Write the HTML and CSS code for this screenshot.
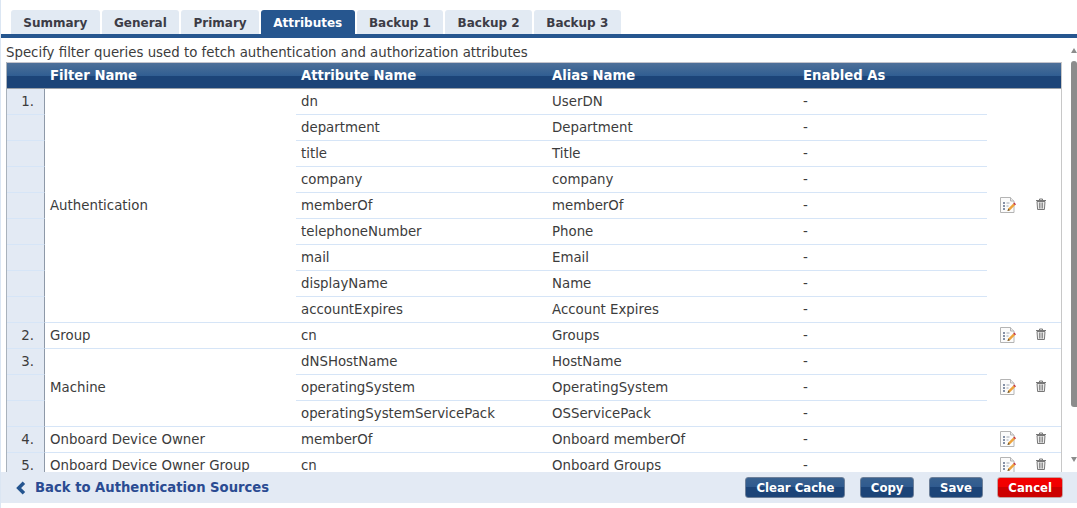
FILE: index.html
```html
<!DOCTYPE html>
<html lang="en">
<head>
<meta charset="utf-8">
<title>Attributes</title>
<link rel="stylesheet" href="styles.css">
</head>
<body>
<svg class="defs" width="0" height="0" aria-hidden="true">
  <symbol id="edit" viewBox="0 0 18 18">
    <path d="M1.5 1.5h10l3.5 3.5v11.500h-13.500z" fill="#fbfbfb" stroke="#b4b4b4"/>
    <path d="M11.500 1.500v3.500h3.500" fill="#e8e8e8" stroke="#b4b4b4"/>
    <path d="M4 7h2M4 10h2M4 13h2" stroke="#5f6f8c" stroke-width="1.500"/>
    <path d="M7.500 7h3M7.500 10h2" stroke="#a0a8b4"/>
    <path d="M8.500 15l.8-2.500 5-5 1.700 1.700-5 5z" fill="#eda33c"/>
    <path d="M8.500 15l.8-2.500 1.700 1.700z" fill="#6b5a3a"/>
    <path d="M14.300 7.500l1-1 1.700 1.700-1 1z" fill="#c8323c"/>
  </symbol>
  <symbol id="trash" viewBox="0 0 12 12">
    <path d="M1 2.500h10M4.500 2.500v-1.500h3v1.500" fill="none" stroke="#777"/>
    <path d="M2 3.500h8l-.6 8h-6.800z" fill="#ececec" stroke="#777"/>
    <path d="M4.500 4.500v6M6 4.500v6M7.500 4.500v6" stroke="#777" stroke-width=".8"/>
  </symbol>
</svg>
<nav class="tabs">
  <a class="tab">Summary</a>
  <a class="tab">General</a>
  <a class="tab">Primary</a>
  <a class="tab active">Attributes</a>
  <a class="tab">Backup 1</a>
  <a class="tab">Backup 2</a>
  <a class="tab">Backup 3</a>
</nav>
<div class="main">
  <div class="content">
    <p class="intro">Specify filter queries used to fetch authentication and authorization attributes</p>
    <table class="grid">
      <colgroup>
        <col class="c-num"><col class="c-name"><col class="c-name"><col class="c-name"><col class="c-en"><col class="c-edit"><col class="c-del">
      </colgroup>
      <thead>
        <tr><th></th><th>Filter Name</th><th>Attribute Name</th><th>Alias Name</th><th>Enabled As</th><th></th><th></th></tr>
      </thead>
      <tbody>
        <tr><td class="num">1.</td><td class="filter" rowspan="9">Authentication</td><td>dn</td><td>UserDN</td><td>-</td><td class="act" rowspan="9"><svg class="i-edit"><use href="#edit"/></svg></td><td class="act del" rowspan="9"><svg class="i-del"><use href="#trash"/></svg></td></tr>
        <tr><td class="num"></td><td>department</td><td>Department</td><td>-</td></tr>
        <tr><td class="num"></td><td>title</td><td>Title</td><td>-</td></tr>
        <tr><td class="num"></td><td>company</td><td>company</td><td>-</td></tr>
        <tr><td class="num"></td><td>memberOf</td><td>memberOf</td><td>-</td></tr>
        <tr><td class="num"></td><td>telephoneNumber</td><td>Phone</td><td>-</td></tr>
        <tr><td class="num"></td><td>mail</td><td>Email</td><td>-</td></tr>
        <tr><td class="num"></td><td>displayName</td><td>Name</td><td>-</td></tr>
        <tr><td class="num"></td><td>accountExpires</td><td>Account Expires</td><td>-</td></tr>
        <tr><td class="num">2.</td><td class="filter">Group</td><td>cn</td><td>Groups</td><td>-</td><td class="act"><svg class="i-edit"><use href="#edit"/></svg></td><td class="act del"><svg class="i-del"><use href="#trash"/></svg></td></tr>
        <tr><td class="num">3.</td><td class="filter" rowspan="3">Machine</td><td>dNSHostName</td><td>HostName</td><td>-</td><td class="act" rowspan="3"><svg class="i-edit"><use href="#edit"/></svg></td><td class="act del" rowspan="3"><svg class="i-del"><use href="#trash"/></svg></td></tr>
        <tr><td class="num"></td><td>operatingSystem</td><td>OperatingSystem</td><td>-</td></tr>
        <tr><td class="num"></td><td>operatingSystemServicePack</td><td>OSServicePack</td><td>-</td></tr>
        <tr><td class="num">4.</td><td class="filter">Onboard Device Owner</td><td>memberOf</td><td>Onboard memberOf</td><td>-</td><td class="act"><svg class="i-edit"><use href="#edit"/></svg></td><td class="act del"><svg class="i-del"><use href="#trash"/></svg></td></tr>
        <tr><td class="num">5.</td><td class="filter">Onboard Device Owner Group</td><td>cn</td><td>Onboard Groups</td><td>-</td><td class="act"><svg class="i-edit"><use href="#edit"/></svg></td><td class="act del"><svg class="i-del"><use href="#trash"/></svg></td></tr>
      </tbody>
    </table>
  </div>
  <div class="scrollbar">
    <span class="arrow up"></span>
    <span class="thumb"></span>
    <span class="arrow down"></span>
  </div>
</div>
<footer class="footer">
  <a class="back"><svg class="chev" viewBox="0 0 10 12"><path d="M7.500 1.500L3 6l4.500 4.500" fill="none" stroke="#24548f" stroke-width="3"/></svg>Back to Authentication Sources</a>
  <div class="buttons">
    <button class="btn">Clear Cache</button>
    <button class="btn">Copy</button>
    <button class="btn">Save</button>
    <button class="btn danger">Cancel</button>
  </div>
</footer>
</body>
</html>
```
FILE: styles.css
```css
* { box-sizing: border-box; }
html, body { height: 100%; }
body {
  margin: 0;
  height: 508px;
  overflow: hidden;
  display: flex;
  flex-direction: column;
  background: #fff;
  color: #3c3c3c;
  font: 13.33px/16px "DejaVu Sans", Verdana, sans-serif;
  border-left: 1px solid #dbe6f3;
  padding-bottom: 5px;
}
.defs { position: absolute; }
.tabs {
  display: flex;
  gap: 2px;
  height: 38px;
  padding: 10px 0 0 10px;
  border-bottom: 4px solid #26568f;
}
.tab {
  height: 24px;
  padding: 0 12.34px;
  line-height: 26px;
  font-size: 12px;
  font-weight: bold;
  background: #e2eaf3;
  border-radius: 3px 3px 0 0;
  color: #3c3c46;
}
.tab.active { background: #26568f; color: #fff; }
.main { flex: 1; min-height: 0; display: flex; }
.content { flex: 1; min-width: 0; overflow: hidden; padding: 0 8px 0 5px; }
.intro { margin: 6px 0 0; height: 18px; line-height: 17px; white-space: nowrap; }
.grid {
  table-layout: fixed;
  width: 1056px;
  border-collapse: separate;
  border-spacing: 0;
  border-left: 1px solid #a9b2bc;
  border-right: 1px solid #c8c8c8;
}
.c-num { width: 38px; }
.c-name { width: 251px; }
.c-en { width: 189px; }
.c-edit { width: 42px; }
.c-del { width: 32px; }
.grid th {
  height: 27px;
  padding: 0 5px;
  text-align: left;
  color: #fff;
  font-size: 13.2px;
  font-weight: bold;
  background: linear-gradient(#4e7099 0, #315e92 50%, #1c4478 50%, #1c4478 100%);
  border-top: 1px solid #c4c4cc;
  border-bottom: 1px solid #9aa0a8;
}
.grid td {
  height: 26px;
  padding: 0 5px;
  border-bottom: 1px solid #d6e5f7;
  white-space: nowrap;
}
.grid .num {
  background: #e3eaf4;
  border-right: 1px solid #8e99a8;
  text-align: right;
  padding-right: 10px;
}
.act { text-align: center; }
.grid .del { padding-right: 14px; }
.act svg { display: inline-block; vertical-align: middle; }
.i-edit { width: 18px; height: 18px; margin-top: -2px; }
.i-del { width: 12px; height: 12px; margin-top: -4px; }
.scrollbar { position: relative; width: 6px; flex: none; }
.thumb { position: absolute; top: 23px; bottom: 65px; left: 0; right: 0; background: #8c8c8c; border-radius: 3px 3px 0 3px; }
.arrow { position: absolute; left: 0; width: 0; height: 0; border: 3px solid transparent; }
.arrow.up { top: 10px; border-top: 0; border-bottom: 5px solid #8c8c8c; }
.arrow.down { bottom: 10px; border-bottom: 0; border-top: 5px solid #8c8c8c; }
.footer {
  flex: none;
  height: 31px;
  display: flex;
  align-items: center;
  justify-content: space-between;
  padding: 0 14px 0 14px;
  background: #e3eaf4;
}
.back { display: flex; align-items: center; gap: 8px; font-size: 13.2px; font-weight: bold; color: #2a4b92; }
.chev { width: 12px; height: 14px; }
.buttons { display: flex; gap: 14.5px; }
.btn {
  height: 21px;
  padding: 0 10px;
  border: 1px solid #6c7f99;
  border-radius: 3px;
  color: #fff;
  font: bold 13px/17px "DejaVu Sans", Verdana, sans-serif;
  font-stretch: condensed;
  background: linear-gradient(#39618f 0, #2f5a8f 50%, #1c4478 50%, #1c4478 100%);
}
.btn.danger {
  border-color: #c4a0a0;
  background: linear-gradient(#f40000 0, #f00000 50%, #cc0000 50%, #cc0000 100%);
}
```
